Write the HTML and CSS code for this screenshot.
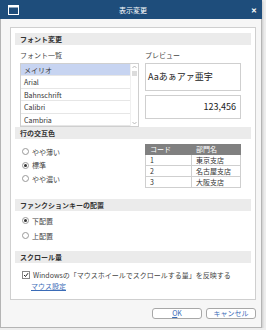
FILE: index.html
```html
<!DOCTYPE html>
<html lang="ja">
<head>
  <meta charset="UTF-8">
  <title>表示変更</title>
  <link rel="stylesheet" href="styles.css">
</head>
<body>
  <div class="ventana">
    <!-- Barra de título -->
    <div class="titulo">
      <svg class="icono" width="11" height="10" viewBox="0 0 11 10">
        <rect x="0.5" y="0.5" width="10" height="9" fill="none" stroke="#fff"/>
        <rect x="0.5" y="0.5" width="10" height="2" fill="#fff"/>
      </svg>
      <span class="titulo-texto">表示変更</span>
      <span class="cerrar">✕</span>
    </div>

    <div class="panel">
      <!-- Fuente -->
      <div class="seccion-titulo">フォント変更</div>
      <div class="fuente">
        <div class="col-lista">
          <div class="etiqueta">フォント一覧</div>
          <div class="lista">
            <div class="filas">
              <div class="fila activo">メイリオ</div>
              <div class="fila">Arial</div>
              <div class="fila">Bahnschrift</div>
              <div class="fila">Calibri</div>
              <div class="fila">Cambria</div>
            </div>
            <div class="barra">
              <svg width="7" height="6" viewBox="0 0 7 6"><path d="M1.5 4 L3.5 2 L5.5 4" fill="none" stroke="#aaa" stroke-width="0.8"/></svg>
              <div class="pulgar"></div>
              <div class="hueco"></div>
              <svg width="7" height="6" viewBox="0 0 7 6"><path d="M1.5 2 L3.5 4 L5.5 2" fill="none" stroke="#aaa" stroke-width="0.8"/></svg>
            </div>
          </div>
        </div>
        <div class="col-vista">
          <div class="etiqueta">プレビュー</div>
          <div class="vista-texto">Aaあぁアァ亜宇</div>
          <div class="vista-numero">123,456</div>
        </div>
      </div>

      <!-- Colores alternos -->
      <div class="seccion-titulo">行の交互色</div>
      <div class="alterno">
        <div class="opciones">
          <div class="opcion"><span class="radio"></span>やや薄い</div>
          <div class="opcion"><span class="radio marcado"></span>標準</div>
          <div class="opcion"><span class="radio"></span>やや濃い</div>
        </div>
        <table class="tabla">
          <tr><th>コード</th><th>部門名</th></tr>
          <tr><td>1</td><td>東京支店</td></tr>
          <tr><td>2</td><td>名古屋支店</td></tr>
          <tr><td>3</td><td>大阪支店</td></tr>
        </table>
      </div>

      <!-- Teclas de función -->
      <div class="seccion-titulo">ファンクションキーの配置</div>
      <div class="opciones funcion">
        <div class="opcion alta"><span class="radio marcado"></span>下配置</div>
        <div class="opcion alta"><span class="radio"></span>上配置</div>
      </div>

      <!-- Desplazamiento -->
      <div class="seccion-titulo">スクロール量</div>
      <div class="scroll">
        <div class="opcion"><span class="check">
          <svg width="6" height="6" viewBox="0 0 6 6"><path d="M1 3 L2.5 4.5 L5 1.2" fill="none" stroke="#222" stroke-width="1"/></svg>
        </span>Windowsの「マウスホイールでスクロールする量」を反映する</div>
        <a class="enlace" href="#">マウス設定</a>
      </div>
    </div>

    <div class="botones">
      <button class="boton"><u>O</u>K</button>
      <button class="boton">キャンセル</button>
    </div>
  </div>
</body>
</html>
```

FILE: styles.css
```css
:root {
  --primario: #1e4d7b;
  --encabezado: #ebebeb;
  --borde: #cfcfcf;
  --texto: #333;
}
body {
  margin: 0;
  background: #ededed;
  font-family: "Noto Sans CJK JP", "Noto Sans", sans-serif;
  font-size: 7px;
  color: var(--texto);
}
.ventana {
  width: 262px;
  height: 328px;
  box-sizing: border-box;
  border: 1px solid #b4b4b4;
  border-top: none;
  background: #f6f6f6;
  box-shadow: 1px 1px 2px rgba(0,0,0,0.15);
}
/* Barra de título */
.titulo {
  height: 19px;
  margin: 0 -1px;
  background: var(--primario);
  color: white;
  display: flex;
  align-items: center;
  padding: 0 8px;
  position: relative;
}
.icono {
  display: block;
}
.titulo-texto {
  flex: 1;
  text-align: center;
  font-size: 7px;
  margin-right: 4px;
}
.cerrar {
  font-size: 7px;
  font-weight: bold;
  margin-right: -3px;
}
/* Panel principal */
.panel {
  margin: 8px 5px 0 9px;
  height: 273px;
  box-sizing: border-box;
  background: white;
  border: 1px solid var(--borde);
  padding: 5px 4px 0 4px;
}
.seccion-titulo {
  height: 12px;
  line-height: 12px;
  background: var(--encabezado);
  font-weight: bold;
  padding-left: 5px;
}
/* Fuente */
.fuente {
  display: flex;
  padding-left: 5px;
}
.col-lista {
  width: 119px;
}
.col-vista {
  width: 96px;
  margin-left: 6px;
}
.etiqueta {
  height: 10px;
  line-height: 10px;
  margin-top: 5px;
  margin-bottom: 3px;
  color: #444;
}
.lista {
  height: 64px;
  box-sizing: border-box;
  border: 1px solid var(--borde);
  display: flex;
}
.filas {
  flex: 1;
}
.fila {
  height: 12.4px;
  line-height: 12px;
  padding-left: 3px;
  border-bottom: 1px solid #e6e6e6;
  box-sizing: border-box;
}
.fila.activo {
  background: #c7d4f1;
}
.barra {
  width: 7px;
  display: flex;
  flex-direction: column;
  border-left: 1px solid #f0f0f0;
}
.pulgar {
  height: 5px;
  margin: 1px 1px 0;
  background: #dcdcdc;
}
.hueco {
  flex: 1;
}
.vista-texto {
  height: 28px;
  box-sizing: border-box;
  border: 1px solid var(--borde);
  font-size: 9px;
  line-height: 26px;
  padding-left: 2px;
  color: #222;
}
.vista-numero {
  height: 24px;
  margin-top: 4px;
  box-sizing: border-box;
  border: 1px solid var(--borde);
  font-size: 9px;
  line-height: 22px;
  text-align: right;
  padding-right: 4px;
  color: #222;
}
/* Colores alternos */
.alterno {
  display: flex;
  justify-content: space-between;
  padding: 5px 10px 11px 7px;
}
.opciones {
  padding-top: 1px;
}
.opcion {
  height: 13.5px;
  display: flex;
  align-items: center;
  color: #444;
}
.opcion.alta {
  height: 15px;
}
.funcion {
  padding: 2px 0 8px 7px;
}
.radio {
  width: 5px;
  height: 5px;
  border: 1px solid #999;
  border-radius: 50%;
  margin-right: 3px;
  box-sizing: content-box;
  position: relative;
}
.radio.marcado::after {
  content: "";
  position: absolute;
  left: 1px;
  top: 1px;
  width: 3px;
  height: 3px;
  border-radius: 50%;
  background: #333;
}
.tabla {
  border-collapse: collapse;
  width: 96px;
  font-size: 7px;
  margin-right: 0;
}
.tabla th {
  background: #808080;
  color: white;
  font-weight: normal;
  text-align: left;
  height: 9px;
  line-height: 9px;
  padding: 0 0 0 4px;
  border: 1px solid #808080;
}
.tabla td {
  height: 10px;
  line-height: 10px;
  padding: 0 0 0 4px;
  border: 1px solid var(--borde);
  color: #333;
}
.tabla th:first-child,
.tabla td:first-child {
  width: 41px;
}
/* Desplazamiento */
.scroll {
  padding: 4px 0 0 7px;
}
.scroll .opcion {
  height: 13px;
  margin-top: 1px;
}
.check {
  width: 6px;
  height: 6px;
  border: 1px solid #888;
  margin-right: 3px;
  display: flex;
  align-items: center;
  justify-content: center;
  background: white;
}
.enlace {
  display: inline-block;
  margin-left: 9px;
  color: #3b6cb7;
  line-height: 10px;
}
/* Botones */
.botones {
  display: flex;
  justify-content: flex-end;
  gap: 4px;
  margin: 8px 5px 0 0;
}
.boton {
  width: 50px;
  height: 11px;
  padding: 0;
  background: white;
  border: 1px solid #a8a8a8;
  border-radius: 3px;
  font-family: inherit;
  font-size: 7px;
  line-height: 9px;
  color: #3b6cb7;
}
```
